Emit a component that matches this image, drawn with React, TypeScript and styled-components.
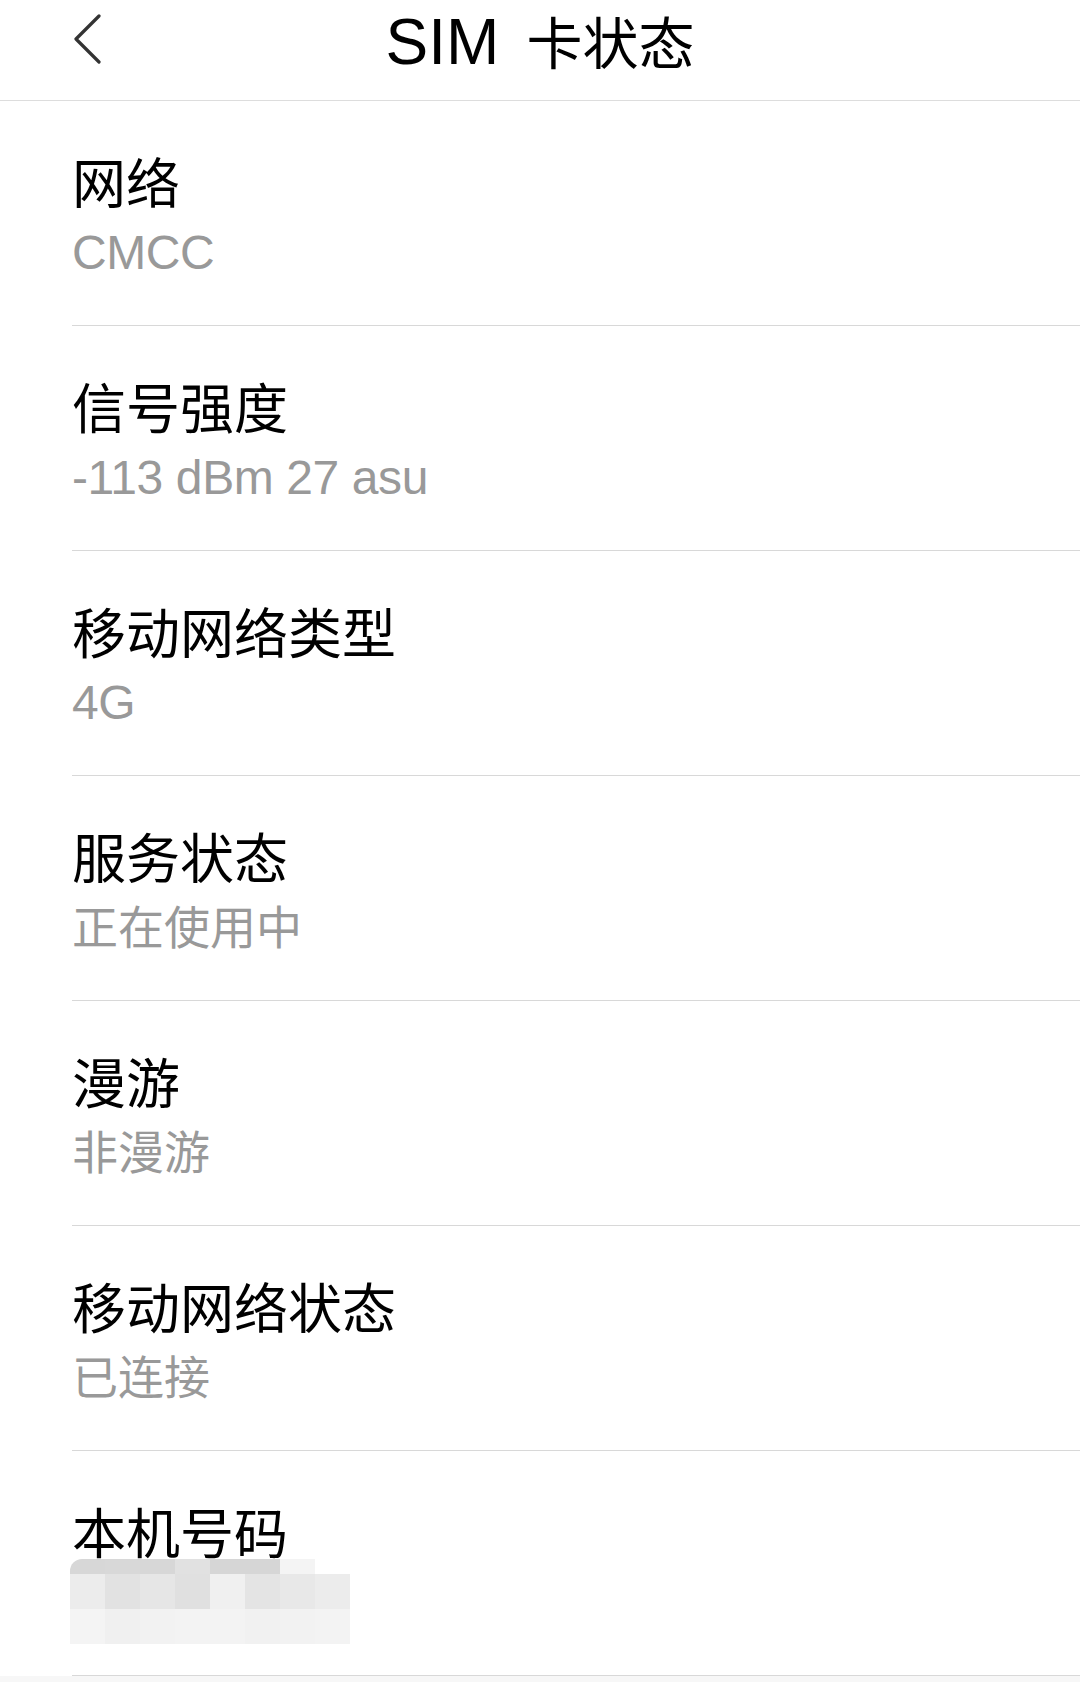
import styled, { createGlobalStyle } from "styled-components";

const GlobalStyle = createGlobalStyle`
	html, body {
		margin: 0;
		padding: 0;
		background: #ffffff;
	}
	* {
		box-sizing: border-box;
	}
`;

const SPage = styled.div`
	width: 1080px;
	height: 1682px;
	overflow: hidden;
	display: flex;
	flex-direction: column;
	background-color: #f7f7f7;
	font-family: "Liberation Sans", "Noto Sans CJK SC", sans-serif;
`;

const SHeader = styled.header`
	height: 101px;
	flex-shrink: 0;
	display: grid;
	grid-template-columns: 1fr auto 1fr;
	align-items: start;
	background-color: #ffffff;
	border-bottom: 1px solid #dddddd;
`;

const SBack = styled.button`
	justify-self: start;
	margin: 14px 0 0 72px;
	padding: 0;
	border: none;
	background: none;
	width: 32px;
	height: 50px;
	display: flex;
	align-items: center;
	justify-content: center;
`;

const STitle = styled.h1`
	margin: 0;
	padding-top: 8px;
	font-weight: 400;
	font-size: 64px;
	line-height: 64px;
	color: #000000;
	white-space: nowrap;
`;

const STitleCjk = styled.span`
	font-family: "Noto Sans CJK SC", sans-serif;
	font-size: 56px;
	margin-left: 27px;
`;

const SList = styled.div`
	background-color: #ffffff;
	display: flex;
	flex-direction: column;
`;

const SRow = styled.div<{ $pb: number }>`
	margin-left: 72px;
	padding: 50px 0 ${(props) => props.$pb}px;
	border-bottom: 1px solid #d8d8d8;
	display: flex;
	flex-direction: column;
`;

const SLabel = styled.div`
	font-family: "Noto Sans CJK SC", sans-serif;
	font-size: 54px;
	line-height: 60px;
	color: #000000;
	white-space: nowrap;
`;

const SValue = styled.div<{ $cjk?: boolean }>`
	margin-top: 12px;
	font-size: ${(props) => (props.$cjk ? 46 : 48)}px;
	line-height: 60px;
	letter-spacing: ${(props) => (props.$cjk ? 0 : -0.4)}px;
	color: #999999;
	white-space: nowrap;
`;

const SMosaic = styled.div`
	margin: -2px 0 0 -2px;
	display: grid;
	grid-template-columns: repeat(8, 35px);
	grid-template-rows: 15px 35px 35px;
	width: 280px;
`;

const STile = styled.div<{ $shade: string }>`
	background-color: ${(props) => props.$shade};
	&:first-child {
		border-top-left-radius: 12px;
	}
`;

const SFiller = styled.div`
	flex: 1;
`;

const rows = [
	{ label: "网络", value: "CMCC" },
	{ label: "信号强度", value: "-113 dBm 27 asu" },
	{ label: "移动网络类型", value: "4G" },
	{ label: "服务状态", value: "正在使用中", cjk: true },
	{ label: "漫游", value: "非漫游", cjk: true },
	{ label: "移动网络状态", value: "已连接", cjk: true },
];

// pixelated phone number
const mosaic = [
	"#d7d7d7", "#d8d8d8", "#d7d7d7", "#e1e1e1", "#d6d6d6", "#d6d6d6", "#f4f4f4", "#ffffff",
	"#ececec", "#e2e2e2", "#e6e6e6", "#e0e0e0", "#f0f0f0", "#e4e4e4", "#e8e8e8", "#ececec",
	"#f4f4f4", "#f0f0f0", "#f2f2f2", "#f3f3f3", "#f3f3f3", "#f1f1f1", "#f2f2f2", "#f3f3f3",
];

function BackIcon() {
	return (
		<svg width="32" height="50" viewBox="0 0 32 50">
			<polyline
				points="27,2 4,25 27,48"
				fill="none"
				stroke="#333333"
				strokeWidth="3.2"
				strokeLinecap="round"
				strokeLinejoin="round"
			/>
		</svg>
	);
}

function App() {
	return (
		<>
			<GlobalStyle />
			<SPage>
				<SHeader>
					<SBack aria-label="back">
						<BackIcon />
					</SBack>
					<STitle>
						SIM<STitleCjk>卡状态</STitleCjk>
					</STitle>
					<div />
				</SHeader>
				<SList>
					{rows.map((row) => (
						<SRow key={row.label} $pb={42}>
							<SLabel>{row.label}</SLabel>
							<SValue $cjk={row.cjk}>{row.value}</SValue>
						</SRow>
					))}
					<SRow $pb={31}>
						<SLabel>本机号码</SLabel>
						<SMosaic>
							{mosaic.map((shade, i) => (
								<STile key={i} $shade={shade} />
							))}
						</SMosaic>
					</SRow>
				</SList>
				<SFiller />
			</SPage>
		</>
	);
}

export default App;
